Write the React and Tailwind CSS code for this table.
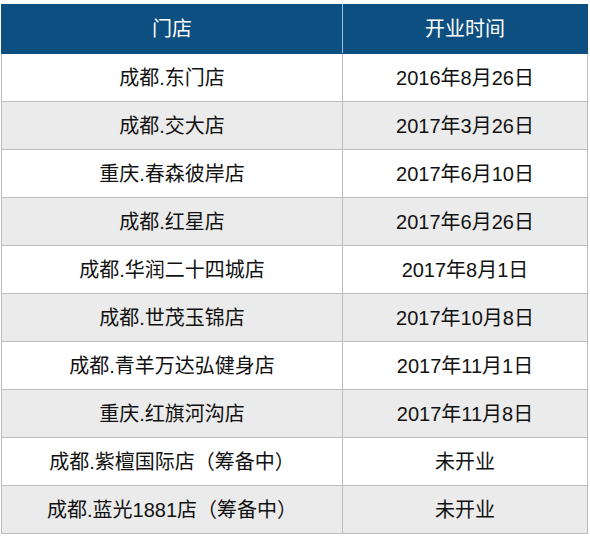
const rows = [
  ["成都.东门店", "2016年8月26日"],
  ["成都.交大店", "2017年3月26日"],
  ["重庆.春森彼岸店", "2017年6月10日"],
  ["成都.红星店", "2017年6月26日"],
  ["成都.华润二十四城店", "2017年8月1日"],
  ["成都.世茂玉锦店", "2017年10月8日"],
  ["成都.青羊万达弘健身店", "2017年11月1日"],
  ["重庆.红旗河沟店", "2017年11月8日"],
  ["成都.紫檀国际店（筹备中）", "未开业"],
  ["成都.蓝光1881店（筹备中）", "未开业"],
];

export default function App() {
  return (
    <div className="w-[590px] h-[540px] bg-white pt-[4px] pl-[1px] font-['Liberation_Sans','Noto_Sans_CJK_SC',sans-serif]">
      <table className="w-[586px] table-fixed border-collapse text-[20px] text-[#111111]">
        <colgroup>
          <col className="w-[341px]" />
          <col className="w-[245px]" />
        </colgroup>
        <thead>
          <tr className="h-[49px] bg-[#0e4f81] text-white">
            <th className="border border-[#0e4f81] border-r-[#9cc0e0] font-normal">门店</th>
            <th className="border border-[#0e4f81] font-normal">开业时间</th>
          </tr>
        </thead>
        <tbody>
          {rows.map(([store, date], i) => (
            <tr key={store} className={`h-[48px] ${i % 2 ? "bg-[#ebebeb]" : "bg-white"}`}>
              <td className="border border-[#bdbdbd] text-center">{store}</td>
              <td className="border border-[#bdbdbd] text-center">{date}</td>
            </tr>
          ))}
        </tbody>
      </table>
    </div>
  );
}
